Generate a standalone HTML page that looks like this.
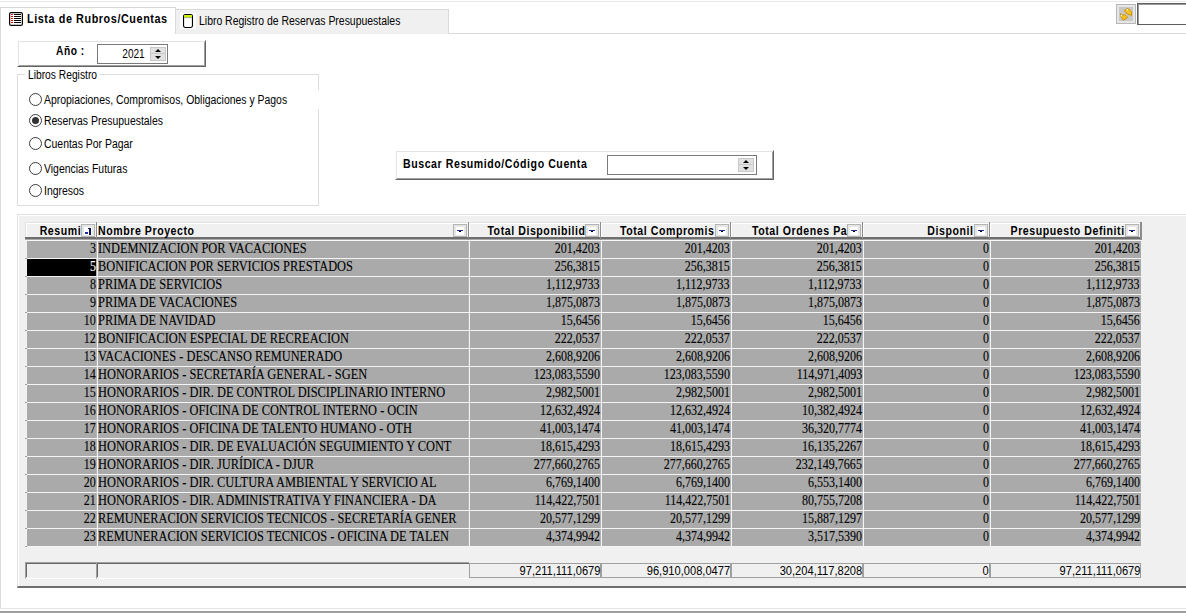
<!DOCTYPE html><html><head><meta charset="utf-8"><style>
*{margin:0;padding:0;box-sizing:border-box}
html,body{width:1186px;height:613px;overflow:hidden;background:#fff;position:relative}
body{font-family:"Liberation Sans",sans-serif;font-size:12px;color:#000}
.a{position:absolute}
.radio{position:absolute;width:13px;height:13px;border-radius:50%;border:1px solid #3c3c3c;background:#fff}
.radio.on::after{content:"";position:absolute;left:2px;top:2px;width:7px;height:7px;border-radius:50%;background:#333}
.dd{position:absolute;width:14px;height:13px;background:#e6e6e6;border:1px solid #b4b4b4}
.dd i{position:absolute;left:2px;top:2px;width:8px;height:8px;background:#fff}
.dd i::before{content:"";position:absolute;left:1px;top:3px;width:6px;height:1px;background:#1c2f8c}
.dd i::after{content:"";position:absolute;left:3px;top:4px;width:2px;height:1px;background:#000}
.spin{position:absolute;background:#e1e1e1;border:1px solid #c8c8c8}
</style></head><body>
<div style="position:absolute;left:0px;top:1px;width:1186px;height:1px;background:#e8e8e8;"></div>
<div style="position:absolute;left:0px;top:33px;width:1px;height:575px;background:#dcdcdc;"></div>
<div style="position:absolute;left:175px;top:33px;width:1011px;height:1px;background:#d9d9d9;"></div>
<div style="position:absolute;left:0px;top:608px;width:1186px;height:1px;background:#e3e3e3;"></div>
<div style="position:absolute;left:0px;top:611px;width:1186px;height:2px;background:#a0a0a0;"></div>
<div class="a" style="left:0;top:7px;width:176px;height:27px;border:1px solid #d9d9d9;border-bottom:none;background:#fff"></div>
<svg class="a" style="left:9px;top:12px" width="14" height="14" viewBox="0 0 14 14">
<rect x="0.6" y="0.6" width="12.8" height="12.8" rx="1.5" fill="#fff" stroke="#000" stroke-width="1.2"/>
<g fill="#e00000" shape-rendering="crispEdges"><rect x="2" y="2" width="2" height="1"/><rect x="2" y="4" width="2" height="1"/><rect x="2" y="6" width="2" height="1"/><rect x="2" y="8" width="2" height="1"/><rect x="2" y="10" width="2" height="1"/></g>
<g fill="#000" shape-rendering="crispEdges"><rect x="5" y="2" width="7" height="1"/><rect x="5" y="4" width="7" height="1"/><rect x="5" y="6" width="7" height="1"/><rect x="5" y="8" width="7" height="1"/><rect x="5" y="10" width="7" height="1"/></g>
</svg>
<div style="position:absolute;left:27px;top:12.84px;font-family:'Liberation Sans',sans-serif;font-weight:bold;font-size:12px;line-height:1;white-space:nowrap;color:#000;transform:scaleX(0.9);transform-origin:left 0;letter-spacing:0.65px;">Lista de Rubros/Cuentas</div>
<div class="a" style="left:175px;top:9px;width:274px;height:25px;border:1px solid #d9d9d9;border-bottom:none;background:#f0f0f0"></div>
<div style="position:absolute;left:180px;top:13px;width:16px;height:16px;background:#fbfbfb;"></div>
<svg class="a" style="left:183px;top:14px" width="10" height="14" viewBox="0 0 10 14">
<rect x="0.55" y="0.55" width="8.9" height="12.9" rx="1.6" fill="#fff" stroke="#000" stroke-width="1.1"/>
<rect x="1.1" y="1.1" width="7.8" height="2.4" fill="#c8f000"/>
<rect x="1.1" y="3.5" width="7.8" height="0.6" fill="#7a7a50"/>
</svg>
<div style="position:absolute;left:199px;top:14.84px;font-family:'Liberation Sans',sans-serif;font-weight:normal;font-size:12px;line-height:1;white-space:nowrap;color:#000;transform:scaleX(0.87);transform-origin:left 0;">Libro Registro de Reservas Presupuestales</div>
<div class="a" style="left:1116px;top:4px;width:20px;height:20px;background:#e6e6e6;border:1px solid #b8b8b8"></div>
<div style="position:absolute;left:1119px;top:7px;width:14px;height:14px;background:#c8c8c8;"></div>
<svg class="a" style="left:1114px;top:2px" width="24" height="24" viewBox="0 0 24 24">
<path d="M13.7 6.3 L10.2 8.4 L11.6 10.2 L13.3 11.9 L17.3 13.5 L17.6 9.8 L15.8 7.8 Z" fill="#f3c21c" stroke="#cf8a00" stroke-width="0.9" stroke-linejoin="round"/>
<path d="M6.3 11.4 L6.7 14.1 L9.4 18.4 L13.7 15.3 L10.8 12.6 L8 13.2 Z" fill="#f3c21c" stroke="#cf8a00" stroke-width="0.9" stroke-linejoin="round"/>
<circle cx="13.4" cy="7.8" r="0.8" fill="#fff"/><circle cx="7.4" cy="13.6" r="0.8" fill="#fff"/>
</svg>
<div class="a" style="left:1137px;top:3px;width:60px;height:22px;border:1px solid #5e5e5e;box-shadow:inset 1px 1px 0 #9a9a9a;background:#fff"></div>
<div class="a" style="left:17px;top:40px;width:189px;height:27px;border:1px solid;border-color:#fff #646464 #646464 #fff;box-shadow:inset 1px 1px 0 #e3e3e3,inset -1px -1px 0 #a0a0a0;background:#fff"></div>
<div style="position:absolute;left:56px;top:44.84px;font-family:'Liberation Sans',sans-serif;font-weight:bold;font-size:12px;line-height:1;white-space:nowrap;color:#000;transform:scaleX(0.85);transform-origin:left 0;letter-spacing:0.65px;">Año :</div>
<div class="a" style="left:97px;top:44px;width:71px;height:20px;border:1px solid #7a7a7a;background:#fff"></div>
<div style="position:absolute;right:1041px;top:47.84px;font-family:'Liberation Sans',sans-serif;font-weight:normal;font-size:12px;line-height:1;white-space:nowrap;color:#000;transform:scaleX(0.84);transform-origin:right 0;">2021</div>
<div class="spin" style="left:150px;top:47px;width:16px;height:14px"></div>
<div style="position:absolute;left:151px;top:53px;width:14px;height:1px;background:#c8c8c8;"></div>
<svg class="a" style="left:150px;top:47px" width="16" height="14"><path d="M5 5 L8 2 L11 5 Z" fill="#000"/><path d="M5 9 L11 9 L8 12 Z" fill="#000"/></svg>
<div class="a" style="left:17px;top:74px;width:302px;height:132px;border:1px solid #dcdcdc"></div>
<div style="position:absolute;left:25px;top:73px;width:74px;height:3px;background:#fff;"></div>
<div style="position:absolute;left:28px;top:68.84px;font-family:'Liberation Sans',sans-serif;font-weight:normal;font-size:12px;line-height:1;white-space:nowrap;color:#000;transform:scaleX(0.855);transform-origin:left 0;">Libros Registro</div>
<div style="position:absolute;left:28px;top:90px;width:295px;height:19px;background:#fff;"></div>
<div class="radio" style="left:29px;top:93px"></div>
<div style="position:absolute;left:44px;top:93.84px;font-family:'Liberation Sans',sans-serif;font-weight:normal;font-size:12px;line-height:1;white-space:nowrap;color:#000;transform:scaleX(0.87);transform-origin:left 0;">Apropiaciones, Compromisos, Obligaciones y Pagos</div>
<div class="radio on" style="left:29px;top:114px"></div>
<div style="position:absolute;left:44px;top:114.84px;font-family:'Liberation Sans',sans-serif;font-weight:normal;font-size:12px;line-height:1;white-space:nowrap;color:#000;transform:scaleX(0.87);transform-origin:left 0;">Reservas Presupuestales</div>
<div class="radio" style="left:29px;top:137px"></div>
<div style="position:absolute;left:44px;top:137.84px;font-family:'Liberation Sans',sans-serif;font-weight:normal;font-size:12px;line-height:1;white-space:nowrap;color:#000;transform:scaleX(0.87);transform-origin:left 0;">Cuentas Por Pagar</div>
<div class="radio" style="left:29px;top:162px"></div>
<div style="position:absolute;left:44px;top:162.84px;font-family:'Liberation Sans',sans-serif;font-weight:normal;font-size:12px;line-height:1;white-space:nowrap;color:#000;transform:scaleX(0.87);transform-origin:left 0;">Vigencias Futuras</div>
<div class="radio" style="left:29px;top:184px"></div>
<div style="position:absolute;left:44px;top:184.84px;font-family:'Liberation Sans',sans-serif;font-weight:normal;font-size:12px;line-height:1;white-space:nowrap;color:#000;transform:scaleX(0.87);transform-origin:left 0;">Ingresos</div>
<div class="a" style="left:395px;top:150px;width:379px;height:30px;border:1px solid;border-color:#fff #646464 #646464 #fff;box-shadow:inset 1px 1px 0 #e3e3e3,inset -1px -1px 0 #a0a0a0;background:#fff"></div>
<div style="position:absolute;left:403px;top:157.84px;font-family:'Liberation Sans',sans-serif;font-weight:bold;font-size:12px;line-height:1;white-space:nowrap;color:#000;transform:scaleX(0.88);transform-origin:left 0;letter-spacing:0.65px;">Buscar Resumido/Código Cuenta</div>
<div class="a" style="left:607px;top:155px;width:150px;height:20px;border:1px solid #7a7a7a;background:#fff"></div>
<div class="spin" style="left:738px;top:158px;width:16px;height:14px"></div>
<div style="position:absolute;left:739px;top:164px;width:14px;height:1px;background:#c8c8c8;"></div>
<svg class="a" style="left:738px;top:158px" width="16" height="14"><path d="M5 5 L8 2 L11 5 Z" fill="#000"/><path d="M5 9 L11 9 L8 12 Z" fill="#000"/></svg>
<div class="a" style="left:17px;top:214px;width:1169px;height:374px;background:#f0f0f0;border-top:1px solid #e0e0e0;border-left:1px solid #e0e0e0;border-bottom:2px solid #6e6e6e"></div>
<div style="position:absolute;left:18px;top:215px;width:1168px;height:1px;background:#fff;"></div>
<div style="position:absolute;left:18px;top:215px;width:1px;height:371px;background:#fff;"></div>
<div style="position:absolute;left:25px;top:222px;width:1116px;height:1px;background:#e3e3e3;"></div>
<div style="position:absolute;left:26px;top:223px;width:1115px;height:1px;background:#fff;"></div>
<div style="position:absolute;left:25px;top:222px;width:1px;height:15px;background:#e3e3e3;"></div>
<div style="position:absolute;left:26px;top:223px;width:1px;height:14px;background:#fff;"></div>
<div style="position:absolute;left:25px;top:237px;width:1116px;height:2px;background:#6e6e6e;"></div>
<div style="position:absolute;left:25px;top:239px;width:1116px;height:1px;background:#a8a8a8;"></div>
<div style="position:absolute;left:25px;top:240px;width:1116px;height:1px;background:#f7f7f7;"></div>
<div style="position:absolute;left:96px;top:222px;width:1px;height:18px;background:#8c8c8c;"></div>
<div class="a" style="left:81px;top:224px;width:14px;height:13px;background:#e6e6e6;border:1px solid #b4b4b4"><div class="a" style="left:2px;top:2px;width:8px;height:8px;background:#fff"></div></div>
<div class="a" style="left:85px;top:232px;width:3px;height:2px;background:#1c2f9c"></div>
<div class="a" style="left:89px;top:228px;width:2px;height:7px;background:#0a1450"></div>
<div class="a" style="left:88px;top:228px;width:1px;height:1px;background:#0a1450"></div>
<div style="position:absolute;right:1105px;top:224.84px;font-family:'Liberation Sans',sans-serif;font-weight:bold;font-size:12px;line-height:1;white-space:nowrap;color:#000;transform:scaleX(0.88);transform-origin:right 0;letter-spacing:0.65px;">Resumi</div>
<div style="position:absolute;left:97px;top:223px;width:1px;height:14px;background:#fff;"></div>
<div style="position:absolute;left:468px;top:222px;width:1px;height:18px;background:#8c8c8c;"></div>
<div class="dd" style="left:453px;top:224px"><i></i></div>
<div style="position:absolute;left:98px;top:224.84px;font-family:'Liberation Sans',sans-serif;font-weight:bold;font-size:12px;line-height:1;white-space:nowrap;color:#000;transform:scaleX(0.88);transform-origin:left 0;letter-spacing:0.65px;">Nombre Proyecto</div>
<div style="position:absolute;left:469px;top:223px;width:1px;height:14px;background:#fff;"></div>
<div style="position:absolute;left:600px;top:222px;width:1px;height:18px;background:#8c8c8c;"></div>
<div class="dd" style="left:585px;top:224px"><i></i></div>
<div style="position:absolute;right:601px;top:224.84px;font-family:'Liberation Sans',sans-serif;font-weight:bold;font-size:12px;line-height:1;white-space:nowrap;color:#000;transform:scaleX(0.88);transform-origin:right 0;letter-spacing:0.65px;">Total Disponibilid</div>
<div style="position:absolute;left:601px;top:223px;width:1px;height:14px;background:#fff;"></div>
<div style="position:absolute;left:730px;top:222px;width:1px;height:18px;background:#8c8c8c;"></div>
<div class="dd" style="left:715px;top:224px"><i></i></div>
<div style="position:absolute;right:471px;top:224.84px;font-family:'Liberation Sans',sans-serif;font-weight:bold;font-size:12px;line-height:1;white-space:nowrap;color:#000;transform:scaleX(0.88);transform-origin:right 0;letter-spacing:0.65px;">Total Compromis</div>
<div style="position:absolute;left:731px;top:223px;width:1px;height:14px;background:#fff;"></div>
<div style="position:absolute;left:862px;top:222px;width:1px;height:18px;background:#8c8c8c;"></div>
<div class="dd" style="left:847px;top:224px"><i></i></div>
<div style="position:absolute;right:339px;top:224.84px;font-family:'Liberation Sans',sans-serif;font-weight:bold;font-size:12px;line-height:1;white-space:nowrap;color:#000;transform:scaleX(0.88);transform-origin:right 0;letter-spacing:0.65px;">Total Ordenes Pa</div>
<div style="position:absolute;left:863px;top:223px;width:1px;height:14px;background:#fff;"></div>
<div style="position:absolute;left:989px;top:222px;width:1px;height:18px;background:#8c8c8c;"></div>
<div class="dd" style="left:974px;top:224px"><i></i></div>
<div style="position:absolute;right:212px;top:224.84px;font-family:'Liberation Sans',sans-serif;font-weight:bold;font-size:12px;line-height:1;white-space:nowrap;color:#000;transform:scaleX(0.88);transform-origin:right 0;letter-spacing:0.65px;">Disponil</div>
<div style="position:absolute;left:990px;top:223px;width:1px;height:14px;background:#fff;"></div>
<div style="position:absolute;left:1140px;top:222px;width:2px;height:18px;background:#8c8c8c;"></div>
<div class="dd" style="left:1125px;top:224px"><i></i></div>
<div style="position:absolute;right:61px;top:224.84px;font-family:'Liberation Sans',sans-serif;font-weight:bold;font-size:12px;line-height:1;white-space:nowrap;color:#000;transform:scaleX(0.88);transform-origin:right 0;letter-spacing:0.65px;">Presupuesto Definiti</div>
<div style="position:absolute;left:27px;top:241px;width:1114px;height:17px;background:#aaaaaa;"></div>
<div style="position:absolute;left:25px;top:258px;width:2px;height:1px;background:#a0a0a0;"></div>
<div style="position:absolute;left:96px;top:241px;width:1px;height:17px;background:#b4b4b4;"></div>
<div style="position:absolute;left:97px;top:241px;width:1px;height:17px;background:#f4f4f4;"></div>
<div style="position:absolute;left:468px;top:241px;width:1px;height:17px;background:#b4b4b4;"></div>
<div style="position:absolute;left:469px;top:241px;width:1px;height:17px;background:#f4f4f4;"></div>
<div style="position:absolute;left:600px;top:241px;width:1px;height:17px;background:#b4b4b4;"></div>
<div style="position:absolute;left:601px;top:241px;width:1px;height:17px;background:#f4f4f4;"></div>
<div style="position:absolute;left:730px;top:241px;width:1px;height:17px;background:#b4b4b4;"></div>
<div style="position:absolute;left:731px;top:241px;width:1px;height:17px;background:#f4f4f4;"></div>
<div style="position:absolute;left:862px;top:241px;width:1px;height:17px;background:#b4b4b4;"></div>
<div style="position:absolute;left:863px;top:241px;width:1px;height:17px;background:#f4f4f4;"></div>
<div style="position:absolute;left:989px;top:241px;width:1px;height:17px;background:#b4b4b4;"></div>
<div style="position:absolute;left:990px;top:241px;width:1px;height:17px;background:#f4f4f4;"></div>
<div style="position:absolute;left:27px;top:258px;width:1114px;height:1px;background:#f4f4f4;"></div>
<div style="position:absolute;right:1090px;top:242.44px;font-family:'Liberation Serif',serif;font-weight:normal;font-size:13.8px;line-height:1;white-space:nowrap;color:#000;transform:scaleX(0.8707);transform-origin:right 0;-webkit-text-stroke:0.1px currentColor;">3</div>
<div style="position:absolute;left:98px;top:242.44px;font-family:'Liberation Serif',serif;font-weight:normal;font-size:13.8px;line-height:1;white-space:nowrap;color:#000;transform:scaleX(0.8971);transform-origin:left 0;-webkit-text-stroke:0.1px currentColor;">INDEMNIZACION POR VACACIONES</div>
<div style="position:absolute;right:586px;top:242.44px;font-family:'Liberation Serif',serif;font-weight:normal;font-size:13.8px;line-height:1;white-space:nowrap;color:#000;transform:scaleX(0.8707);transform-origin:right 0;-webkit-text-stroke:0.1px currentColor;">201,4203</div>
<div style="position:absolute;right:456px;top:242.44px;font-family:'Liberation Serif',serif;font-weight:normal;font-size:13.8px;line-height:1;white-space:nowrap;color:#000;transform:scaleX(0.8707);transform-origin:right 0;-webkit-text-stroke:0.1px currentColor;">201,4203</div>
<div style="position:absolute;right:324px;top:242.44px;font-family:'Liberation Serif',serif;font-weight:normal;font-size:13.8px;line-height:1;white-space:nowrap;color:#000;transform:scaleX(0.8707);transform-origin:right 0;-webkit-text-stroke:0.1px currentColor;">201,4203</div>
<div style="position:absolute;right:197px;top:242.44px;font-family:'Liberation Serif',serif;font-weight:normal;font-size:13.8px;line-height:1;white-space:nowrap;color:#000;transform:scaleX(0.8707);transform-origin:right 0;-webkit-text-stroke:0.1px currentColor;">0</div>
<div style="position:absolute;right:46px;top:242.44px;font-family:'Liberation Serif',serif;font-weight:normal;font-size:13.8px;line-height:1;white-space:nowrap;color:#000;transform:scaleX(0.8707);transform-origin:right 0;-webkit-text-stroke:0.1px currentColor;">201,4203</div>
<div style="position:absolute;left:27px;top:259px;width:1114px;height:17px;background:#aaaaaa;"></div>
<div style="position:absolute;left:25px;top:276px;width:2px;height:1px;background:#a0a0a0;"></div>
<div style="position:absolute;left:27px;top:259px;width:69px;height:17px;background:#000;"></div>
<div style="position:absolute;left:96px;top:259px;width:1px;height:17px;background:#b4b4b4;"></div>
<div style="position:absolute;left:97px;top:259px;width:1px;height:17px;background:#f4f4f4;"></div>
<div style="position:absolute;left:468px;top:259px;width:1px;height:17px;background:#b4b4b4;"></div>
<div style="position:absolute;left:469px;top:259px;width:1px;height:17px;background:#f4f4f4;"></div>
<div style="position:absolute;left:600px;top:259px;width:1px;height:17px;background:#b4b4b4;"></div>
<div style="position:absolute;left:601px;top:259px;width:1px;height:17px;background:#f4f4f4;"></div>
<div style="position:absolute;left:730px;top:259px;width:1px;height:17px;background:#b4b4b4;"></div>
<div style="position:absolute;left:731px;top:259px;width:1px;height:17px;background:#f4f4f4;"></div>
<div style="position:absolute;left:862px;top:259px;width:1px;height:17px;background:#b4b4b4;"></div>
<div style="position:absolute;left:863px;top:259px;width:1px;height:17px;background:#f4f4f4;"></div>
<div style="position:absolute;left:989px;top:259px;width:1px;height:17px;background:#b4b4b4;"></div>
<div style="position:absolute;left:990px;top:259px;width:1px;height:17px;background:#f4f4f4;"></div>
<div style="position:absolute;left:27px;top:276px;width:1114px;height:1px;background:#f4f4f4;"></div>
<div style="position:absolute;right:1090px;top:260.44px;font-family:'Liberation Serif',serif;font-weight:normal;font-size:13.8px;line-height:1;white-space:nowrap;color:#fff;transform:scaleX(0.8707);transform-origin:right 0;-webkit-text-stroke:0.1px currentColor;">5</div>
<div style="position:absolute;left:98px;top:260.44px;font-family:'Liberation Serif',serif;font-weight:normal;font-size:13.8px;line-height:1;white-space:nowrap;color:#000;transform:scaleX(0.8971);transform-origin:left 0;-webkit-text-stroke:0.1px currentColor;">BONIFICACION POR SERVICIOS PRESTADOS</div>
<div style="position:absolute;right:586px;top:260.44px;font-family:'Liberation Serif',serif;font-weight:normal;font-size:13.8px;line-height:1;white-space:nowrap;color:#000;transform:scaleX(0.8707);transform-origin:right 0;-webkit-text-stroke:0.1px currentColor;">256,3815</div>
<div style="position:absolute;right:456px;top:260.44px;font-family:'Liberation Serif',serif;font-weight:normal;font-size:13.8px;line-height:1;white-space:nowrap;color:#000;transform:scaleX(0.8707);transform-origin:right 0;-webkit-text-stroke:0.1px currentColor;">256,3815</div>
<div style="position:absolute;right:324px;top:260.44px;font-family:'Liberation Serif',serif;font-weight:normal;font-size:13.8px;line-height:1;white-space:nowrap;color:#000;transform:scaleX(0.8707);transform-origin:right 0;-webkit-text-stroke:0.1px currentColor;">256,3815</div>
<div style="position:absolute;right:197px;top:260.44px;font-family:'Liberation Serif',serif;font-weight:normal;font-size:13.8px;line-height:1;white-space:nowrap;color:#000;transform:scaleX(0.8707);transform-origin:right 0;-webkit-text-stroke:0.1px currentColor;">0</div>
<div style="position:absolute;right:46px;top:260.44px;font-family:'Liberation Serif',serif;font-weight:normal;font-size:13.8px;line-height:1;white-space:nowrap;color:#000;transform:scaleX(0.8707);transform-origin:right 0;-webkit-text-stroke:0.1px currentColor;">256,3815</div>
<div style="position:absolute;left:27px;top:277px;width:1114px;height:17px;background:#aaaaaa;"></div>
<div style="position:absolute;left:25px;top:294px;width:2px;height:1px;background:#a0a0a0;"></div>
<div style="position:absolute;left:96px;top:277px;width:1px;height:17px;background:#b4b4b4;"></div>
<div style="position:absolute;left:97px;top:277px;width:1px;height:17px;background:#f4f4f4;"></div>
<div style="position:absolute;left:468px;top:277px;width:1px;height:17px;background:#b4b4b4;"></div>
<div style="position:absolute;left:469px;top:277px;width:1px;height:17px;background:#f4f4f4;"></div>
<div style="position:absolute;left:600px;top:277px;width:1px;height:17px;background:#b4b4b4;"></div>
<div style="position:absolute;left:601px;top:277px;width:1px;height:17px;background:#f4f4f4;"></div>
<div style="position:absolute;left:730px;top:277px;width:1px;height:17px;background:#b4b4b4;"></div>
<div style="position:absolute;left:731px;top:277px;width:1px;height:17px;background:#f4f4f4;"></div>
<div style="position:absolute;left:862px;top:277px;width:1px;height:17px;background:#b4b4b4;"></div>
<div style="position:absolute;left:863px;top:277px;width:1px;height:17px;background:#f4f4f4;"></div>
<div style="position:absolute;left:989px;top:277px;width:1px;height:17px;background:#b4b4b4;"></div>
<div style="position:absolute;left:990px;top:277px;width:1px;height:17px;background:#f4f4f4;"></div>
<div style="position:absolute;left:27px;top:294px;width:1114px;height:1px;background:#f4f4f4;"></div>
<div style="position:absolute;right:1090px;top:278.44px;font-family:'Liberation Serif',serif;font-weight:normal;font-size:13.8px;line-height:1;white-space:nowrap;color:#000;transform:scaleX(0.8707);transform-origin:right 0;-webkit-text-stroke:0.1px currentColor;">8</div>
<div style="position:absolute;left:98px;top:278.44px;font-family:'Liberation Serif',serif;font-weight:normal;font-size:13.8px;line-height:1;white-space:nowrap;color:#000;transform:scaleX(0.8971);transform-origin:left 0;-webkit-text-stroke:0.1px currentColor;">PRIMA DE SERVICIOS</div>
<div style="position:absolute;right:586px;top:278.44px;font-family:'Liberation Serif',serif;font-weight:normal;font-size:13.8px;line-height:1;white-space:nowrap;color:#000;transform:scaleX(0.8707);transform-origin:right 0;-webkit-text-stroke:0.1px currentColor;">1,112,9733</div>
<div style="position:absolute;right:456px;top:278.44px;font-family:'Liberation Serif',serif;font-weight:normal;font-size:13.8px;line-height:1;white-space:nowrap;color:#000;transform:scaleX(0.8707);transform-origin:right 0;-webkit-text-stroke:0.1px currentColor;">1,112,9733</div>
<div style="position:absolute;right:324px;top:278.44px;font-family:'Liberation Serif',serif;font-weight:normal;font-size:13.8px;line-height:1;white-space:nowrap;color:#000;transform:scaleX(0.8707);transform-origin:right 0;-webkit-text-stroke:0.1px currentColor;">1,112,9733</div>
<div style="position:absolute;right:197px;top:278.44px;font-family:'Liberation Serif',serif;font-weight:normal;font-size:13.8px;line-height:1;white-space:nowrap;color:#000;transform:scaleX(0.8707);transform-origin:right 0;-webkit-text-stroke:0.1px currentColor;">0</div>
<div style="position:absolute;right:46px;top:278.44px;font-family:'Liberation Serif',serif;font-weight:normal;font-size:13.8px;line-height:1;white-space:nowrap;color:#000;transform:scaleX(0.8707);transform-origin:right 0;-webkit-text-stroke:0.1px currentColor;">1,112,9733</div>
<div style="position:absolute;left:27px;top:295px;width:1114px;height:17px;background:#aaaaaa;"></div>
<div style="position:absolute;left:25px;top:312px;width:2px;height:1px;background:#a0a0a0;"></div>
<div style="position:absolute;left:96px;top:295px;width:1px;height:17px;background:#b4b4b4;"></div>
<div style="position:absolute;left:97px;top:295px;width:1px;height:17px;background:#f4f4f4;"></div>
<div style="position:absolute;left:468px;top:295px;width:1px;height:17px;background:#b4b4b4;"></div>
<div style="position:absolute;left:469px;top:295px;width:1px;height:17px;background:#f4f4f4;"></div>
<div style="position:absolute;left:600px;top:295px;width:1px;height:17px;background:#b4b4b4;"></div>
<div style="position:absolute;left:601px;top:295px;width:1px;height:17px;background:#f4f4f4;"></div>
<div style="position:absolute;left:730px;top:295px;width:1px;height:17px;background:#b4b4b4;"></div>
<div style="position:absolute;left:731px;top:295px;width:1px;height:17px;background:#f4f4f4;"></div>
<div style="position:absolute;left:862px;top:295px;width:1px;height:17px;background:#b4b4b4;"></div>
<div style="position:absolute;left:863px;top:295px;width:1px;height:17px;background:#f4f4f4;"></div>
<div style="position:absolute;left:989px;top:295px;width:1px;height:17px;background:#b4b4b4;"></div>
<div style="position:absolute;left:990px;top:295px;width:1px;height:17px;background:#f4f4f4;"></div>
<div style="position:absolute;left:27px;top:312px;width:1114px;height:1px;background:#f4f4f4;"></div>
<div style="position:absolute;right:1090px;top:296.44px;font-family:'Liberation Serif',serif;font-weight:normal;font-size:13.8px;line-height:1;white-space:nowrap;color:#000;transform:scaleX(0.8707);transform-origin:right 0;-webkit-text-stroke:0.1px currentColor;">9</div>
<div style="position:absolute;left:98px;top:296.44px;font-family:'Liberation Serif',serif;font-weight:normal;font-size:13.8px;line-height:1;white-space:nowrap;color:#000;transform:scaleX(0.8971);transform-origin:left 0;-webkit-text-stroke:0.1px currentColor;">PRIMA DE VACACIONES</div>
<div style="position:absolute;right:586px;top:296.44px;font-family:'Liberation Serif',serif;font-weight:normal;font-size:13.8px;line-height:1;white-space:nowrap;color:#000;transform:scaleX(0.8707);transform-origin:right 0;-webkit-text-stroke:0.1px currentColor;">1,875,0873</div>
<div style="position:absolute;right:456px;top:296.44px;font-family:'Liberation Serif',serif;font-weight:normal;font-size:13.8px;line-height:1;white-space:nowrap;color:#000;transform:scaleX(0.8707);transform-origin:right 0;-webkit-text-stroke:0.1px currentColor;">1,875,0873</div>
<div style="position:absolute;right:324px;top:296.44px;font-family:'Liberation Serif',serif;font-weight:normal;font-size:13.8px;line-height:1;white-space:nowrap;color:#000;transform:scaleX(0.8707);transform-origin:right 0;-webkit-text-stroke:0.1px currentColor;">1,875,0873</div>
<div style="position:absolute;right:197px;top:296.44px;font-family:'Liberation Serif',serif;font-weight:normal;font-size:13.8px;line-height:1;white-space:nowrap;color:#000;transform:scaleX(0.8707);transform-origin:right 0;-webkit-text-stroke:0.1px currentColor;">0</div>
<div style="position:absolute;right:46px;top:296.44px;font-family:'Liberation Serif',serif;font-weight:normal;font-size:13.8px;line-height:1;white-space:nowrap;color:#000;transform:scaleX(0.8707);transform-origin:right 0;-webkit-text-stroke:0.1px currentColor;">1,875,0873</div>
<div style="position:absolute;left:27px;top:313px;width:1114px;height:17px;background:#aaaaaa;"></div>
<div style="position:absolute;left:25px;top:330px;width:2px;height:1px;background:#a0a0a0;"></div>
<div style="position:absolute;left:96px;top:313px;width:1px;height:17px;background:#b4b4b4;"></div>
<div style="position:absolute;left:97px;top:313px;width:1px;height:17px;background:#f4f4f4;"></div>
<div style="position:absolute;left:468px;top:313px;width:1px;height:17px;background:#b4b4b4;"></div>
<div style="position:absolute;left:469px;top:313px;width:1px;height:17px;background:#f4f4f4;"></div>
<div style="position:absolute;left:600px;top:313px;width:1px;height:17px;background:#b4b4b4;"></div>
<div style="position:absolute;left:601px;top:313px;width:1px;height:17px;background:#f4f4f4;"></div>
<div style="position:absolute;left:730px;top:313px;width:1px;height:17px;background:#b4b4b4;"></div>
<div style="position:absolute;left:731px;top:313px;width:1px;height:17px;background:#f4f4f4;"></div>
<div style="position:absolute;left:862px;top:313px;width:1px;height:17px;background:#b4b4b4;"></div>
<div style="position:absolute;left:863px;top:313px;width:1px;height:17px;background:#f4f4f4;"></div>
<div style="position:absolute;left:989px;top:313px;width:1px;height:17px;background:#b4b4b4;"></div>
<div style="position:absolute;left:990px;top:313px;width:1px;height:17px;background:#f4f4f4;"></div>
<div style="position:absolute;left:27px;top:330px;width:1114px;height:1px;background:#f4f4f4;"></div>
<div style="position:absolute;right:1090px;top:314.44px;font-family:'Liberation Serif',serif;font-weight:normal;font-size:13.8px;line-height:1;white-space:nowrap;color:#000;transform:scaleX(0.8707);transform-origin:right 0;-webkit-text-stroke:0.1px currentColor;">10</div>
<div style="position:absolute;left:98px;top:314.44px;font-family:'Liberation Serif',serif;font-weight:normal;font-size:13.8px;line-height:1;white-space:nowrap;color:#000;transform:scaleX(0.8971);transform-origin:left 0;-webkit-text-stroke:0.1px currentColor;">PRIMA DE NAVIDAD</div>
<div style="position:absolute;right:586px;top:314.44px;font-family:'Liberation Serif',serif;font-weight:normal;font-size:13.8px;line-height:1;white-space:nowrap;color:#000;transform:scaleX(0.8707);transform-origin:right 0;-webkit-text-stroke:0.1px currentColor;">15,6456</div>
<div style="position:absolute;right:456px;top:314.44px;font-family:'Liberation Serif',serif;font-weight:normal;font-size:13.8px;line-height:1;white-space:nowrap;color:#000;transform:scaleX(0.8707);transform-origin:right 0;-webkit-text-stroke:0.1px currentColor;">15,6456</div>
<div style="position:absolute;right:324px;top:314.44px;font-family:'Liberation Serif',serif;font-weight:normal;font-size:13.8px;line-height:1;white-space:nowrap;color:#000;transform:scaleX(0.8707);transform-origin:right 0;-webkit-text-stroke:0.1px currentColor;">15,6456</div>
<div style="position:absolute;right:197px;top:314.44px;font-family:'Liberation Serif',serif;font-weight:normal;font-size:13.8px;line-height:1;white-space:nowrap;color:#000;transform:scaleX(0.8707);transform-origin:right 0;-webkit-text-stroke:0.1px currentColor;">0</div>
<div style="position:absolute;right:46px;top:314.44px;font-family:'Liberation Serif',serif;font-weight:normal;font-size:13.8px;line-height:1;white-space:nowrap;color:#000;transform:scaleX(0.8707);transform-origin:right 0;-webkit-text-stroke:0.1px currentColor;">15,6456</div>
<div style="position:absolute;left:27px;top:331px;width:1114px;height:17px;background:#aaaaaa;"></div>
<div style="position:absolute;left:25px;top:348px;width:2px;height:1px;background:#a0a0a0;"></div>
<div style="position:absolute;left:96px;top:331px;width:1px;height:17px;background:#b4b4b4;"></div>
<div style="position:absolute;left:97px;top:331px;width:1px;height:17px;background:#f4f4f4;"></div>
<div style="position:absolute;left:468px;top:331px;width:1px;height:17px;background:#b4b4b4;"></div>
<div style="position:absolute;left:469px;top:331px;width:1px;height:17px;background:#f4f4f4;"></div>
<div style="position:absolute;left:600px;top:331px;width:1px;height:17px;background:#b4b4b4;"></div>
<div style="position:absolute;left:601px;top:331px;width:1px;height:17px;background:#f4f4f4;"></div>
<div style="position:absolute;left:730px;top:331px;width:1px;height:17px;background:#b4b4b4;"></div>
<div style="position:absolute;left:731px;top:331px;width:1px;height:17px;background:#f4f4f4;"></div>
<div style="position:absolute;left:862px;top:331px;width:1px;height:17px;background:#b4b4b4;"></div>
<div style="position:absolute;left:863px;top:331px;width:1px;height:17px;background:#f4f4f4;"></div>
<div style="position:absolute;left:989px;top:331px;width:1px;height:17px;background:#b4b4b4;"></div>
<div style="position:absolute;left:990px;top:331px;width:1px;height:17px;background:#f4f4f4;"></div>
<div style="position:absolute;left:27px;top:348px;width:1114px;height:1px;background:#f4f4f4;"></div>
<div style="position:absolute;right:1090px;top:332.44px;font-family:'Liberation Serif',serif;font-weight:normal;font-size:13.8px;line-height:1;white-space:nowrap;color:#000;transform:scaleX(0.8707);transform-origin:right 0;-webkit-text-stroke:0.1px currentColor;">12</div>
<div style="position:absolute;left:98px;top:332.44px;font-family:'Liberation Serif',serif;font-weight:normal;font-size:13.8px;line-height:1;white-space:nowrap;color:#000;transform:scaleX(0.8971);transform-origin:left 0;-webkit-text-stroke:0.1px currentColor;">BONIFICACION ESPECIAL DE RECREACION</div>
<div style="position:absolute;right:586px;top:332.44px;font-family:'Liberation Serif',serif;font-weight:normal;font-size:13.8px;line-height:1;white-space:nowrap;color:#000;transform:scaleX(0.8707);transform-origin:right 0;-webkit-text-stroke:0.1px currentColor;">222,0537</div>
<div style="position:absolute;right:456px;top:332.44px;font-family:'Liberation Serif',serif;font-weight:normal;font-size:13.8px;line-height:1;white-space:nowrap;color:#000;transform:scaleX(0.8707);transform-origin:right 0;-webkit-text-stroke:0.1px currentColor;">222,0537</div>
<div style="position:absolute;right:324px;top:332.44px;font-family:'Liberation Serif',serif;font-weight:normal;font-size:13.8px;line-height:1;white-space:nowrap;color:#000;transform:scaleX(0.8707);transform-origin:right 0;-webkit-text-stroke:0.1px currentColor;">222,0537</div>
<div style="position:absolute;right:197px;top:332.44px;font-family:'Liberation Serif',serif;font-weight:normal;font-size:13.8px;line-height:1;white-space:nowrap;color:#000;transform:scaleX(0.8707);transform-origin:right 0;-webkit-text-stroke:0.1px currentColor;">0</div>
<div style="position:absolute;right:46px;top:332.44px;font-family:'Liberation Serif',serif;font-weight:normal;font-size:13.8px;line-height:1;white-space:nowrap;color:#000;transform:scaleX(0.8707);transform-origin:right 0;-webkit-text-stroke:0.1px currentColor;">222,0537</div>
<div style="position:absolute;left:27px;top:349px;width:1114px;height:17px;background:#aaaaaa;"></div>
<div style="position:absolute;left:25px;top:366px;width:2px;height:1px;background:#a0a0a0;"></div>
<div style="position:absolute;left:96px;top:349px;width:1px;height:17px;background:#b4b4b4;"></div>
<div style="position:absolute;left:97px;top:349px;width:1px;height:17px;background:#f4f4f4;"></div>
<div style="position:absolute;left:468px;top:349px;width:1px;height:17px;background:#b4b4b4;"></div>
<div style="position:absolute;left:469px;top:349px;width:1px;height:17px;background:#f4f4f4;"></div>
<div style="position:absolute;left:600px;top:349px;width:1px;height:17px;background:#b4b4b4;"></div>
<div style="position:absolute;left:601px;top:349px;width:1px;height:17px;background:#f4f4f4;"></div>
<div style="position:absolute;left:730px;top:349px;width:1px;height:17px;background:#b4b4b4;"></div>
<div style="position:absolute;left:731px;top:349px;width:1px;height:17px;background:#f4f4f4;"></div>
<div style="position:absolute;left:862px;top:349px;width:1px;height:17px;background:#b4b4b4;"></div>
<div style="position:absolute;left:863px;top:349px;width:1px;height:17px;background:#f4f4f4;"></div>
<div style="position:absolute;left:989px;top:349px;width:1px;height:17px;background:#b4b4b4;"></div>
<div style="position:absolute;left:990px;top:349px;width:1px;height:17px;background:#f4f4f4;"></div>
<div style="position:absolute;left:27px;top:366px;width:1114px;height:1px;background:#f4f4f4;"></div>
<div style="position:absolute;right:1090px;top:350.44px;font-family:'Liberation Serif',serif;font-weight:normal;font-size:13.8px;line-height:1;white-space:nowrap;color:#000;transform:scaleX(0.8707);transform-origin:right 0;-webkit-text-stroke:0.1px currentColor;">13</div>
<div style="position:absolute;left:98px;top:350.44px;font-family:'Liberation Serif',serif;font-weight:normal;font-size:13.8px;line-height:1;white-space:nowrap;color:#000;transform:scaleX(0.8971);transform-origin:left 0;-webkit-text-stroke:0.1px currentColor;">VACACIONES - DESCANSO REMUNERADO</div>
<div style="position:absolute;right:586px;top:350.44px;font-family:'Liberation Serif',serif;font-weight:normal;font-size:13.8px;line-height:1;white-space:nowrap;color:#000;transform:scaleX(0.8707);transform-origin:right 0;-webkit-text-stroke:0.1px currentColor;">2,608,9206</div>
<div style="position:absolute;right:456px;top:350.44px;font-family:'Liberation Serif',serif;font-weight:normal;font-size:13.8px;line-height:1;white-space:nowrap;color:#000;transform:scaleX(0.8707);transform-origin:right 0;-webkit-text-stroke:0.1px currentColor;">2,608,9206</div>
<div style="position:absolute;right:324px;top:350.44px;font-family:'Liberation Serif',serif;font-weight:normal;font-size:13.8px;line-height:1;white-space:nowrap;color:#000;transform:scaleX(0.8707);transform-origin:right 0;-webkit-text-stroke:0.1px currentColor;">2,608,9206</div>
<div style="position:absolute;right:197px;top:350.44px;font-family:'Liberation Serif',serif;font-weight:normal;font-size:13.8px;line-height:1;white-space:nowrap;color:#000;transform:scaleX(0.8707);transform-origin:right 0;-webkit-text-stroke:0.1px currentColor;">0</div>
<div style="position:absolute;right:46px;top:350.44px;font-family:'Liberation Serif',serif;font-weight:normal;font-size:13.8px;line-height:1;white-space:nowrap;color:#000;transform:scaleX(0.8707);transform-origin:right 0;-webkit-text-stroke:0.1px currentColor;">2,608,9206</div>
<div style="position:absolute;left:27px;top:367px;width:1114px;height:17px;background:#aaaaaa;"></div>
<div style="position:absolute;left:25px;top:384px;width:2px;height:1px;background:#a0a0a0;"></div>
<div style="position:absolute;left:96px;top:367px;width:1px;height:17px;background:#b4b4b4;"></div>
<div style="position:absolute;left:97px;top:367px;width:1px;height:17px;background:#f4f4f4;"></div>
<div style="position:absolute;left:468px;top:367px;width:1px;height:17px;background:#b4b4b4;"></div>
<div style="position:absolute;left:469px;top:367px;width:1px;height:17px;background:#f4f4f4;"></div>
<div style="position:absolute;left:600px;top:367px;width:1px;height:17px;background:#b4b4b4;"></div>
<div style="position:absolute;left:601px;top:367px;width:1px;height:17px;background:#f4f4f4;"></div>
<div style="position:absolute;left:730px;top:367px;width:1px;height:17px;background:#b4b4b4;"></div>
<div style="position:absolute;left:731px;top:367px;width:1px;height:17px;background:#f4f4f4;"></div>
<div style="position:absolute;left:862px;top:367px;width:1px;height:17px;background:#b4b4b4;"></div>
<div style="position:absolute;left:863px;top:367px;width:1px;height:17px;background:#f4f4f4;"></div>
<div style="position:absolute;left:989px;top:367px;width:1px;height:17px;background:#b4b4b4;"></div>
<div style="position:absolute;left:990px;top:367px;width:1px;height:17px;background:#f4f4f4;"></div>
<div style="position:absolute;left:27px;top:384px;width:1114px;height:1px;background:#f4f4f4;"></div>
<div style="position:absolute;right:1090px;top:368.44px;font-family:'Liberation Serif',serif;font-weight:normal;font-size:13.8px;line-height:1;white-space:nowrap;color:#000;transform:scaleX(0.8707);transform-origin:right 0;-webkit-text-stroke:0.1px currentColor;">14</div>
<div style="position:absolute;left:98px;top:368.44px;font-family:'Liberation Serif',serif;font-weight:normal;font-size:13.8px;line-height:1;white-space:nowrap;color:#000;transform:scaleX(0.8971);transform-origin:left 0;-webkit-text-stroke:0.1px currentColor;">HONORARIOS - SECRETARÍA GENERAL - SGEN</div>
<div style="position:absolute;right:586px;top:368.44px;font-family:'Liberation Serif',serif;font-weight:normal;font-size:13.8px;line-height:1;white-space:nowrap;color:#000;transform:scaleX(0.8707);transform-origin:right 0;-webkit-text-stroke:0.1px currentColor;">123,083,5590</div>
<div style="position:absolute;right:456px;top:368.44px;font-family:'Liberation Serif',serif;font-weight:normal;font-size:13.8px;line-height:1;white-space:nowrap;color:#000;transform:scaleX(0.8707);transform-origin:right 0;-webkit-text-stroke:0.1px currentColor;">123,083,5590</div>
<div style="position:absolute;right:324px;top:368.44px;font-family:'Liberation Serif',serif;font-weight:normal;font-size:13.8px;line-height:1;white-space:nowrap;color:#000;transform:scaleX(0.8707);transform-origin:right 0;-webkit-text-stroke:0.1px currentColor;">114,971,4093</div>
<div style="position:absolute;right:197px;top:368.44px;font-family:'Liberation Serif',serif;font-weight:normal;font-size:13.8px;line-height:1;white-space:nowrap;color:#000;transform:scaleX(0.8707);transform-origin:right 0;-webkit-text-stroke:0.1px currentColor;">0</div>
<div style="position:absolute;right:46px;top:368.44px;font-family:'Liberation Serif',serif;font-weight:normal;font-size:13.8px;line-height:1;white-space:nowrap;color:#000;transform:scaleX(0.8707);transform-origin:right 0;-webkit-text-stroke:0.1px currentColor;">123,083,5590</div>
<div style="position:absolute;left:27px;top:385px;width:1114px;height:17px;background:#aaaaaa;"></div>
<div style="position:absolute;left:25px;top:402px;width:2px;height:1px;background:#a0a0a0;"></div>
<div style="position:absolute;left:96px;top:385px;width:1px;height:17px;background:#b4b4b4;"></div>
<div style="position:absolute;left:97px;top:385px;width:1px;height:17px;background:#f4f4f4;"></div>
<div style="position:absolute;left:468px;top:385px;width:1px;height:17px;background:#b4b4b4;"></div>
<div style="position:absolute;left:469px;top:385px;width:1px;height:17px;background:#f4f4f4;"></div>
<div style="position:absolute;left:600px;top:385px;width:1px;height:17px;background:#b4b4b4;"></div>
<div style="position:absolute;left:601px;top:385px;width:1px;height:17px;background:#f4f4f4;"></div>
<div style="position:absolute;left:730px;top:385px;width:1px;height:17px;background:#b4b4b4;"></div>
<div style="position:absolute;left:731px;top:385px;width:1px;height:17px;background:#f4f4f4;"></div>
<div style="position:absolute;left:862px;top:385px;width:1px;height:17px;background:#b4b4b4;"></div>
<div style="position:absolute;left:863px;top:385px;width:1px;height:17px;background:#f4f4f4;"></div>
<div style="position:absolute;left:989px;top:385px;width:1px;height:17px;background:#b4b4b4;"></div>
<div style="position:absolute;left:990px;top:385px;width:1px;height:17px;background:#f4f4f4;"></div>
<div style="position:absolute;left:27px;top:402px;width:1114px;height:1px;background:#f4f4f4;"></div>
<div style="position:absolute;right:1090px;top:386.44px;font-family:'Liberation Serif',serif;font-weight:normal;font-size:13.8px;line-height:1;white-space:nowrap;color:#000;transform:scaleX(0.8707);transform-origin:right 0;-webkit-text-stroke:0.1px currentColor;">15</div>
<div style="position:absolute;left:98px;top:386.44px;font-family:'Liberation Serif',serif;font-weight:normal;font-size:13.8px;line-height:1;white-space:nowrap;color:#000;transform:scaleX(0.8971);transform-origin:left 0;-webkit-text-stroke:0.1px currentColor;">HONORARIOS - DIR. DE CONTROL DISCIPLINARIO INTERNO</div>
<div style="position:absolute;right:586px;top:386.44px;font-family:'Liberation Serif',serif;font-weight:normal;font-size:13.8px;line-height:1;white-space:nowrap;color:#000;transform:scaleX(0.8707);transform-origin:right 0;-webkit-text-stroke:0.1px currentColor;">2,982,5001</div>
<div style="position:absolute;right:456px;top:386.44px;font-family:'Liberation Serif',serif;font-weight:normal;font-size:13.8px;line-height:1;white-space:nowrap;color:#000;transform:scaleX(0.8707);transform-origin:right 0;-webkit-text-stroke:0.1px currentColor;">2,982,5001</div>
<div style="position:absolute;right:324px;top:386.44px;font-family:'Liberation Serif',serif;font-weight:normal;font-size:13.8px;line-height:1;white-space:nowrap;color:#000;transform:scaleX(0.8707);transform-origin:right 0;-webkit-text-stroke:0.1px currentColor;">2,982,5001</div>
<div style="position:absolute;right:197px;top:386.44px;font-family:'Liberation Serif',serif;font-weight:normal;font-size:13.8px;line-height:1;white-space:nowrap;color:#000;transform:scaleX(0.8707);transform-origin:right 0;-webkit-text-stroke:0.1px currentColor;">0</div>
<div style="position:absolute;right:46px;top:386.44px;font-family:'Liberation Serif',serif;font-weight:normal;font-size:13.8px;line-height:1;white-space:nowrap;color:#000;transform:scaleX(0.8707);transform-origin:right 0;-webkit-text-stroke:0.1px currentColor;">2,982,5001</div>
<div style="position:absolute;left:27px;top:403px;width:1114px;height:17px;background:#aaaaaa;"></div>
<div style="position:absolute;left:25px;top:420px;width:2px;height:1px;background:#a0a0a0;"></div>
<div style="position:absolute;left:96px;top:403px;width:1px;height:17px;background:#b4b4b4;"></div>
<div style="position:absolute;left:97px;top:403px;width:1px;height:17px;background:#f4f4f4;"></div>
<div style="position:absolute;left:468px;top:403px;width:1px;height:17px;background:#b4b4b4;"></div>
<div style="position:absolute;left:469px;top:403px;width:1px;height:17px;background:#f4f4f4;"></div>
<div style="position:absolute;left:600px;top:403px;width:1px;height:17px;background:#b4b4b4;"></div>
<div style="position:absolute;left:601px;top:403px;width:1px;height:17px;background:#f4f4f4;"></div>
<div style="position:absolute;left:730px;top:403px;width:1px;height:17px;background:#b4b4b4;"></div>
<div style="position:absolute;left:731px;top:403px;width:1px;height:17px;background:#f4f4f4;"></div>
<div style="position:absolute;left:862px;top:403px;width:1px;height:17px;background:#b4b4b4;"></div>
<div style="position:absolute;left:863px;top:403px;width:1px;height:17px;background:#f4f4f4;"></div>
<div style="position:absolute;left:989px;top:403px;width:1px;height:17px;background:#b4b4b4;"></div>
<div style="position:absolute;left:990px;top:403px;width:1px;height:17px;background:#f4f4f4;"></div>
<div style="position:absolute;left:27px;top:420px;width:1114px;height:1px;background:#f4f4f4;"></div>
<div style="position:absolute;right:1090px;top:404.44px;font-family:'Liberation Serif',serif;font-weight:normal;font-size:13.8px;line-height:1;white-space:nowrap;color:#000;transform:scaleX(0.8707);transform-origin:right 0;-webkit-text-stroke:0.1px currentColor;">16</div>
<div style="position:absolute;left:98px;top:404.44px;font-family:'Liberation Serif',serif;font-weight:normal;font-size:13.8px;line-height:1;white-space:nowrap;color:#000;transform:scaleX(0.8971);transform-origin:left 0;-webkit-text-stroke:0.1px currentColor;">HONORARIOS - OFICINA DE CONTROL INTERNO - OCIN</div>
<div style="position:absolute;right:586px;top:404.44px;font-family:'Liberation Serif',serif;font-weight:normal;font-size:13.8px;line-height:1;white-space:nowrap;color:#000;transform:scaleX(0.8707);transform-origin:right 0;-webkit-text-stroke:0.1px currentColor;">12,632,4924</div>
<div style="position:absolute;right:456px;top:404.44px;font-family:'Liberation Serif',serif;font-weight:normal;font-size:13.8px;line-height:1;white-space:nowrap;color:#000;transform:scaleX(0.8707);transform-origin:right 0;-webkit-text-stroke:0.1px currentColor;">12,632,4924</div>
<div style="position:absolute;right:324px;top:404.44px;font-family:'Liberation Serif',serif;font-weight:normal;font-size:13.8px;line-height:1;white-space:nowrap;color:#000;transform:scaleX(0.8707);transform-origin:right 0;-webkit-text-stroke:0.1px currentColor;">10,382,4924</div>
<div style="position:absolute;right:197px;top:404.44px;font-family:'Liberation Serif',serif;font-weight:normal;font-size:13.8px;line-height:1;white-space:nowrap;color:#000;transform:scaleX(0.8707);transform-origin:right 0;-webkit-text-stroke:0.1px currentColor;">0</div>
<div style="position:absolute;right:46px;top:404.44px;font-family:'Liberation Serif',serif;font-weight:normal;font-size:13.8px;line-height:1;white-space:nowrap;color:#000;transform:scaleX(0.8707);transform-origin:right 0;-webkit-text-stroke:0.1px currentColor;">12,632,4924</div>
<div style="position:absolute;left:27px;top:421px;width:1114px;height:17px;background:#aaaaaa;"></div>
<div style="position:absolute;left:25px;top:438px;width:2px;height:1px;background:#a0a0a0;"></div>
<div style="position:absolute;left:96px;top:421px;width:1px;height:17px;background:#b4b4b4;"></div>
<div style="position:absolute;left:97px;top:421px;width:1px;height:17px;background:#f4f4f4;"></div>
<div style="position:absolute;left:468px;top:421px;width:1px;height:17px;background:#b4b4b4;"></div>
<div style="position:absolute;left:469px;top:421px;width:1px;height:17px;background:#f4f4f4;"></div>
<div style="position:absolute;left:600px;top:421px;width:1px;height:17px;background:#b4b4b4;"></div>
<div style="position:absolute;left:601px;top:421px;width:1px;height:17px;background:#f4f4f4;"></div>
<div style="position:absolute;left:730px;top:421px;width:1px;height:17px;background:#b4b4b4;"></div>
<div style="position:absolute;left:731px;top:421px;width:1px;height:17px;background:#f4f4f4;"></div>
<div style="position:absolute;left:862px;top:421px;width:1px;height:17px;background:#b4b4b4;"></div>
<div style="position:absolute;left:863px;top:421px;width:1px;height:17px;background:#f4f4f4;"></div>
<div style="position:absolute;left:989px;top:421px;width:1px;height:17px;background:#b4b4b4;"></div>
<div style="position:absolute;left:990px;top:421px;width:1px;height:17px;background:#f4f4f4;"></div>
<div style="position:absolute;left:27px;top:438px;width:1114px;height:1px;background:#f4f4f4;"></div>
<div style="position:absolute;right:1090px;top:422.44px;font-family:'Liberation Serif',serif;font-weight:normal;font-size:13.8px;line-height:1;white-space:nowrap;color:#000;transform:scaleX(0.8707);transform-origin:right 0;-webkit-text-stroke:0.1px currentColor;">17</div>
<div style="position:absolute;left:98px;top:422.44px;font-family:'Liberation Serif',serif;font-weight:normal;font-size:13.8px;line-height:1;white-space:nowrap;color:#000;transform:scaleX(0.8971);transform-origin:left 0;-webkit-text-stroke:0.1px currentColor;">HONORARIOS - OFICINA DE TALENTO HUMANO - OTH</div>
<div style="position:absolute;right:586px;top:422.44px;font-family:'Liberation Serif',serif;font-weight:normal;font-size:13.8px;line-height:1;white-space:nowrap;color:#000;transform:scaleX(0.8707);transform-origin:right 0;-webkit-text-stroke:0.1px currentColor;">41,003,1474</div>
<div style="position:absolute;right:456px;top:422.44px;font-family:'Liberation Serif',serif;font-weight:normal;font-size:13.8px;line-height:1;white-space:nowrap;color:#000;transform:scaleX(0.8707);transform-origin:right 0;-webkit-text-stroke:0.1px currentColor;">41,003,1474</div>
<div style="position:absolute;right:324px;top:422.44px;font-family:'Liberation Serif',serif;font-weight:normal;font-size:13.8px;line-height:1;white-space:nowrap;color:#000;transform:scaleX(0.8707);transform-origin:right 0;-webkit-text-stroke:0.1px currentColor;">36,320,7774</div>
<div style="position:absolute;right:197px;top:422.44px;font-family:'Liberation Serif',serif;font-weight:normal;font-size:13.8px;line-height:1;white-space:nowrap;color:#000;transform:scaleX(0.8707);transform-origin:right 0;-webkit-text-stroke:0.1px currentColor;">0</div>
<div style="position:absolute;right:46px;top:422.44px;font-family:'Liberation Serif',serif;font-weight:normal;font-size:13.8px;line-height:1;white-space:nowrap;color:#000;transform:scaleX(0.8707);transform-origin:right 0;-webkit-text-stroke:0.1px currentColor;">41,003,1474</div>
<div style="position:absolute;left:27px;top:439px;width:1114px;height:17px;background:#aaaaaa;"></div>
<div style="position:absolute;left:25px;top:456px;width:2px;height:1px;background:#a0a0a0;"></div>
<div style="position:absolute;left:96px;top:439px;width:1px;height:17px;background:#b4b4b4;"></div>
<div style="position:absolute;left:97px;top:439px;width:1px;height:17px;background:#f4f4f4;"></div>
<div style="position:absolute;left:468px;top:439px;width:1px;height:17px;background:#b4b4b4;"></div>
<div style="position:absolute;left:469px;top:439px;width:1px;height:17px;background:#f4f4f4;"></div>
<div style="position:absolute;left:600px;top:439px;width:1px;height:17px;background:#b4b4b4;"></div>
<div style="position:absolute;left:601px;top:439px;width:1px;height:17px;background:#f4f4f4;"></div>
<div style="position:absolute;left:730px;top:439px;width:1px;height:17px;background:#b4b4b4;"></div>
<div style="position:absolute;left:731px;top:439px;width:1px;height:17px;background:#f4f4f4;"></div>
<div style="position:absolute;left:862px;top:439px;width:1px;height:17px;background:#b4b4b4;"></div>
<div style="position:absolute;left:863px;top:439px;width:1px;height:17px;background:#f4f4f4;"></div>
<div style="position:absolute;left:989px;top:439px;width:1px;height:17px;background:#b4b4b4;"></div>
<div style="position:absolute;left:990px;top:439px;width:1px;height:17px;background:#f4f4f4;"></div>
<div style="position:absolute;left:27px;top:456px;width:1114px;height:1px;background:#f4f4f4;"></div>
<div style="position:absolute;right:1090px;top:440.44px;font-family:'Liberation Serif',serif;font-weight:normal;font-size:13.8px;line-height:1;white-space:nowrap;color:#000;transform:scaleX(0.8707);transform-origin:right 0;-webkit-text-stroke:0.1px currentColor;">18</div>
<div style="position:absolute;left:98px;top:440.44px;font-family:'Liberation Serif',serif;font-weight:normal;font-size:13.8px;line-height:1;white-space:nowrap;color:#000;transform:scaleX(0.8971);transform-origin:left 0;-webkit-text-stroke:0.1px currentColor;">HONORARIOS - DIR. DE EVALUACIÓN SEGUIMIENTO Y CONT</div>
<div style="position:absolute;right:586px;top:440.44px;font-family:'Liberation Serif',serif;font-weight:normal;font-size:13.8px;line-height:1;white-space:nowrap;color:#000;transform:scaleX(0.8707);transform-origin:right 0;-webkit-text-stroke:0.1px currentColor;">18,615,4293</div>
<div style="position:absolute;right:456px;top:440.44px;font-family:'Liberation Serif',serif;font-weight:normal;font-size:13.8px;line-height:1;white-space:nowrap;color:#000;transform:scaleX(0.8707);transform-origin:right 0;-webkit-text-stroke:0.1px currentColor;">18,615,4293</div>
<div style="position:absolute;right:324px;top:440.44px;font-family:'Liberation Serif',serif;font-weight:normal;font-size:13.8px;line-height:1;white-space:nowrap;color:#000;transform:scaleX(0.8707);transform-origin:right 0;-webkit-text-stroke:0.1px currentColor;">16,135,2267</div>
<div style="position:absolute;right:197px;top:440.44px;font-family:'Liberation Serif',serif;font-weight:normal;font-size:13.8px;line-height:1;white-space:nowrap;color:#000;transform:scaleX(0.8707);transform-origin:right 0;-webkit-text-stroke:0.1px currentColor;">0</div>
<div style="position:absolute;right:46px;top:440.44px;font-family:'Liberation Serif',serif;font-weight:normal;font-size:13.8px;line-height:1;white-space:nowrap;color:#000;transform:scaleX(0.8707);transform-origin:right 0;-webkit-text-stroke:0.1px currentColor;">18,615,4293</div>
<div style="position:absolute;left:27px;top:457px;width:1114px;height:17px;background:#aaaaaa;"></div>
<div style="position:absolute;left:25px;top:474px;width:2px;height:1px;background:#a0a0a0;"></div>
<div style="position:absolute;left:96px;top:457px;width:1px;height:17px;background:#b4b4b4;"></div>
<div style="position:absolute;left:97px;top:457px;width:1px;height:17px;background:#f4f4f4;"></div>
<div style="position:absolute;left:468px;top:457px;width:1px;height:17px;background:#b4b4b4;"></div>
<div style="position:absolute;left:469px;top:457px;width:1px;height:17px;background:#f4f4f4;"></div>
<div style="position:absolute;left:600px;top:457px;width:1px;height:17px;background:#b4b4b4;"></div>
<div style="position:absolute;left:601px;top:457px;width:1px;height:17px;background:#f4f4f4;"></div>
<div style="position:absolute;left:730px;top:457px;width:1px;height:17px;background:#b4b4b4;"></div>
<div style="position:absolute;left:731px;top:457px;width:1px;height:17px;background:#f4f4f4;"></div>
<div style="position:absolute;left:862px;top:457px;width:1px;height:17px;background:#b4b4b4;"></div>
<div style="position:absolute;left:863px;top:457px;width:1px;height:17px;background:#f4f4f4;"></div>
<div style="position:absolute;left:989px;top:457px;width:1px;height:17px;background:#b4b4b4;"></div>
<div style="position:absolute;left:990px;top:457px;width:1px;height:17px;background:#f4f4f4;"></div>
<div style="position:absolute;left:27px;top:474px;width:1114px;height:1px;background:#f4f4f4;"></div>
<div style="position:absolute;right:1090px;top:458.44px;font-family:'Liberation Serif',serif;font-weight:normal;font-size:13.8px;line-height:1;white-space:nowrap;color:#000;transform:scaleX(0.8707);transform-origin:right 0;-webkit-text-stroke:0.1px currentColor;">19</div>
<div style="position:absolute;left:98px;top:458.44px;font-family:'Liberation Serif',serif;font-weight:normal;font-size:13.8px;line-height:1;white-space:nowrap;color:#000;transform:scaleX(0.8971);transform-origin:left 0;-webkit-text-stroke:0.1px currentColor;">HONORARIOS - DIR. JURÍDICA - DJUR</div>
<div style="position:absolute;right:586px;top:458.44px;font-family:'Liberation Serif',serif;font-weight:normal;font-size:13.8px;line-height:1;white-space:nowrap;color:#000;transform:scaleX(0.8707);transform-origin:right 0;-webkit-text-stroke:0.1px currentColor;">277,660,2765</div>
<div style="position:absolute;right:456px;top:458.44px;font-family:'Liberation Serif',serif;font-weight:normal;font-size:13.8px;line-height:1;white-space:nowrap;color:#000;transform:scaleX(0.8707);transform-origin:right 0;-webkit-text-stroke:0.1px currentColor;">277,660,2765</div>
<div style="position:absolute;right:324px;top:458.44px;font-family:'Liberation Serif',serif;font-weight:normal;font-size:13.8px;line-height:1;white-space:nowrap;color:#000;transform:scaleX(0.8707);transform-origin:right 0;-webkit-text-stroke:0.1px currentColor;">232,149,7665</div>
<div style="position:absolute;right:197px;top:458.44px;font-family:'Liberation Serif',serif;font-weight:normal;font-size:13.8px;line-height:1;white-space:nowrap;color:#000;transform:scaleX(0.8707);transform-origin:right 0;-webkit-text-stroke:0.1px currentColor;">0</div>
<div style="position:absolute;right:46px;top:458.44px;font-family:'Liberation Serif',serif;font-weight:normal;font-size:13.8px;line-height:1;white-space:nowrap;color:#000;transform:scaleX(0.8707);transform-origin:right 0;-webkit-text-stroke:0.1px currentColor;">277,660,2765</div>
<div style="position:absolute;left:27px;top:475px;width:1114px;height:17px;background:#aaaaaa;"></div>
<div style="position:absolute;left:25px;top:492px;width:2px;height:1px;background:#a0a0a0;"></div>
<div style="position:absolute;left:96px;top:475px;width:1px;height:17px;background:#b4b4b4;"></div>
<div style="position:absolute;left:97px;top:475px;width:1px;height:17px;background:#f4f4f4;"></div>
<div style="position:absolute;left:468px;top:475px;width:1px;height:17px;background:#b4b4b4;"></div>
<div style="position:absolute;left:469px;top:475px;width:1px;height:17px;background:#f4f4f4;"></div>
<div style="position:absolute;left:600px;top:475px;width:1px;height:17px;background:#b4b4b4;"></div>
<div style="position:absolute;left:601px;top:475px;width:1px;height:17px;background:#f4f4f4;"></div>
<div style="position:absolute;left:730px;top:475px;width:1px;height:17px;background:#b4b4b4;"></div>
<div style="position:absolute;left:731px;top:475px;width:1px;height:17px;background:#f4f4f4;"></div>
<div style="position:absolute;left:862px;top:475px;width:1px;height:17px;background:#b4b4b4;"></div>
<div style="position:absolute;left:863px;top:475px;width:1px;height:17px;background:#f4f4f4;"></div>
<div style="position:absolute;left:989px;top:475px;width:1px;height:17px;background:#b4b4b4;"></div>
<div style="position:absolute;left:990px;top:475px;width:1px;height:17px;background:#f4f4f4;"></div>
<div style="position:absolute;left:27px;top:492px;width:1114px;height:1px;background:#f4f4f4;"></div>
<div style="position:absolute;right:1090px;top:476.44px;font-family:'Liberation Serif',serif;font-weight:normal;font-size:13.8px;line-height:1;white-space:nowrap;color:#000;transform:scaleX(0.8707);transform-origin:right 0;-webkit-text-stroke:0.1px currentColor;">20</div>
<div style="position:absolute;left:98px;top:476.44px;font-family:'Liberation Serif',serif;font-weight:normal;font-size:13.8px;line-height:1;white-space:nowrap;color:#000;transform:scaleX(0.8971);transform-origin:left 0;-webkit-text-stroke:0.1px currentColor;">HONORARIOS - DIR. CULTURA AMBIENTAL Y SERVICIO AL</div>
<div style="position:absolute;right:586px;top:476.44px;font-family:'Liberation Serif',serif;font-weight:normal;font-size:13.8px;line-height:1;white-space:nowrap;color:#000;transform:scaleX(0.8707);transform-origin:right 0;-webkit-text-stroke:0.1px currentColor;">6,769,1400</div>
<div style="position:absolute;right:456px;top:476.44px;font-family:'Liberation Serif',serif;font-weight:normal;font-size:13.8px;line-height:1;white-space:nowrap;color:#000;transform:scaleX(0.8707);transform-origin:right 0;-webkit-text-stroke:0.1px currentColor;">6,769,1400</div>
<div style="position:absolute;right:324px;top:476.44px;font-family:'Liberation Serif',serif;font-weight:normal;font-size:13.8px;line-height:1;white-space:nowrap;color:#000;transform:scaleX(0.8707);transform-origin:right 0;-webkit-text-stroke:0.1px currentColor;">6,553,1400</div>
<div style="position:absolute;right:197px;top:476.44px;font-family:'Liberation Serif',serif;font-weight:normal;font-size:13.8px;line-height:1;white-space:nowrap;color:#000;transform:scaleX(0.8707);transform-origin:right 0;-webkit-text-stroke:0.1px currentColor;">0</div>
<div style="position:absolute;right:46px;top:476.44px;font-family:'Liberation Serif',serif;font-weight:normal;font-size:13.8px;line-height:1;white-space:nowrap;color:#000;transform:scaleX(0.8707);transform-origin:right 0;-webkit-text-stroke:0.1px currentColor;">6,769,1400</div>
<div style="position:absolute;left:27px;top:493px;width:1114px;height:17px;background:#aaaaaa;"></div>
<div style="position:absolute;left:25px;top:510px;width:2px;height:1px;background:#a0a0a0;"></div>
<div style="position:absolute;left:96px;top:493px;width:1px;height:17px;background:#b4b4b4;"></div>
<div style="position:absolute;left:97px;top:493px;width:1px;height:17px;background:#f4f4f4;"></div>
<div style="position:absolute;left:468px;top:493px;width:1px;height:17px;background:#b4b4b4;"></div>
<div style="position:absolute;left:469px;top:493px;width:1px;height:17px;background:#f4f4f4;"></div>
<div style="position:absolute;left:600px;top:493px;width:1px;height:17px;background:#b4b4b4;"></div>
<div style="position:absolute;left:601px;top:493px;width:1px;height:17px;background:#f4f4f4;"></div>
<div style="position:absolute;left:730px;top:493px;width:1px;height:17px;background:#b4b4b4;"></div>
<div style="position:absolute;left:731px;top:493px;width:1px;height:17px;background:#f4f4f4;"></div>
<div style="position:absolute;left:862px;top:493px;width:1px;height:17px;background:#b4b4b4;"></div>
<div style="position:absolute;left:863px;top:493px;width:1px;height:17px;background:#f4f4f4;"></div>
<div style="position:absolute;left:989px;top:493px;width:1px;height:17px;background:#b4b4b4;"></div>
<div style="position:absolute;left:990px;top:493px;width:1px;height:17px;background:#f4f4f4;"></div>
<div style="position:absolute;left:27px;top:510px;width:1114px;height:1px;background:#f4f4f4;"></div>
<div style="position:absolute;right:1090px;top:494.44px;font-family:'Liberation Serif',serif;font-weight:normal;font-size:13.8px;line-height:1;white-space:nowrap;color:#000;transform:scaleX(0.8707);transform-origin:right 0;-webkit-text-stroke:0.1px currentColor;">21</div>
<div style="position:absolute;left:98px;top:494.44px;font-family:'Liberation Serif',serif;font-weight:normal;font-size:13.8px;line-height:1;white-space:nowrap;color:#000;transform:scaleX(0.8971);transform-origin:left 0;-webkit-text-stroke:0.1px currentColor;">HONORARIOS - DIR. ADMINISTRATIVA Y FINANCIERA - DA</div>
<div style="position:absolute;right:586px;top:494.44px;font-family:'Liberation Serif',serif;font-weight:normal;font-size:13.8px;line-height:1;white-space:nowrap;color:#000;transform:scaleX(0.8707);transform-origin:right 0;-webkit-text-stroke:0.1px currentColor;">114,422,7501</div>
<div style="position:absolute;right:456px;top:494.44px;font-family:'Liberation Serif',serif;font-weight:normal;font-size:13.8px;line-height:1;white-space:nowrap;color:#000;transform:scaleX(0.8707);transform-origin:right 0;-webkit-text-stroke:0.1px currentColor;">114,422,7501</div>
<div style="position:absolute;right:324px;top:494.44px;font-family:'Liberation Serif',serif;font-weight:normal;font-size:13.8px;line-height:1;white-space:nowrap;color:#000;transform:scaleX(0.8707);transform-origin:right 0;-webkit-text-stroke:0.1px currentColor;">80,755,7208</div>
<div style="position:absolute;right:197px;top:494.44px;font-family:'Liberation Serif',serif;font-weight:normal;font-size:13.8px;line-height:1;white-space:nowrap;color:#000;transform:scaleX(0.8707);transform-origin:right 0;-webkit-text-stroke:0.1px currentColor;">0</div>
<div style="position:absolute;right:46px;top:494.44px;font-family:'Liberation Serif',serif;font-weight:normal;font-size:13.8px;line-height:1;white-space:nowrap;color:#000;transform:scaleX(0.8707);transform-origin:right 0;-webkit-text-stroke:0.1px currentColor;">114,422,7501</div>
<div style="position:absolute;left:27px;top:511px;width:1114px;height:17px;background:#aaaaaa;"></div>
<div style="position:absolute;left:25px;top:528px;width:2px;height:1px;background:#a0a0a0;"></div>
<div style="position:absolute;left:96px;top:511px;width:1px;height:17px;background:#b4b4b4;"></div>
<div style="position:absolute;left:97px;top:511px;width:1px;height:17px;background:#f4f4f4;"></div>
<div style="position:absolute;left:468px;top:511px;width:1px;height:17px;background:#b4b4b4;"></div>
<div style="position:absolute;left:469px;top:511px;width:1px;height:17px;background:#f4f4f4;"></div>
<div style="position:absolute;left:600px;top:511px;width:1px;height:17px;background:#b4b4b4;"></div>
<div style="position:absolute;left:601px;top:511px;width:1px;height:17px;background:#f4f4f4;"></div>
<div style="position:absolute;left:730px;top:511px;width:1px;height:17px;background:#b4b4b4;"></div>
<div style="position:absolute;left:731px;top:511px;width:1px;height:17px;background:#f4f4f4;"></div>
<div style="position:absolute;left:862px;top:511px;width:1px;height:17px;background:#b4b4b4;"></div>
<div style="position:absolute;left:863px;top:511px;width:1px;height:17px;background:#f4f4f4;"></div>
<div style="position:absolute;left:989px;top:511px;width:1px;height:17px;background:#b4b4b4;"></div>
<div style="position:absolute;left:990px;top:511px;width:1px;height:17px;background:#f4f4f4;"></div>
<div style="position:absolute;left:27px;top:528px;width:1114px;height:1px;background:#f4f4f4;"></div>
<div style="position:absolute;right:1090px;top:512.44px;font-family:'Liberation Serif',serif;font-weight:normal;font-size:13.8px;line-height:1;white-space:nowrap;color:#000;transform:scaleX(0.8707);transform-origin:right 0;-webkit-text-stroke:0.1px currentColor;">22</div>
<div style="position:absolute;left:98px;top:512.44px;font-family:'Liberation Serif',serif;font-weight:normal;font-size:13.8px;line-height:1;white-space:nowrap;color:#000;transform:scaleX(0.8971);transform-origin:left 0;-webkit-text-stroke:0.1px currentColor;">REMUNERACION SERVICIOS TECNICOS - SECRETARÍA GENER</div>
<div style="position:absolute;right:586px;top:512.44px;font-family:'Liberation Serif',serif;font-weight:normal;font-size:13.8px;line-height:1;white-space:nowrap;color:#000;transform:scaleX(0.8707);transform-origin:right 0;-webkit-text-stroke:0.1px currentColor;">20,577,1299</div>
<div style="position:absolute;right:456px;top:512.44px;font-family:'Liberation Serif',serif;font-weight:normal;font-size:13.8px;line-height:1;white-space:nowrap;color:#000;transform:scaleX(0.8707);transform-origin:right 0;-webkit-text-stroke:0.1px currentColor;">20,577,1299</div>
<div style="position:absolute;right:324px;top:512.44px;font-family:'Liberation Serif',serif;font-weight:normal;font-size:13.8px;line-height:1;white-space:nowrap;color:#000;transform:scaleX(0.8707);transform-origin:right 0;-webkit-text-stroke:0.1px currentColor;">15,887,1297</div>
<div style="position:absolute;right:197px;top:512.44px;font-family:'Liberation Serif',serif;font-weight:normal;font-size:13.8px;line-height:1;white-space:nowrap;color:#000;transform:scaleX(0.8707);transform-origin:right 0;-webkit-text-stroke:0.1px currentColor;">0</div>
<div style="position:absolute;right:46px;top:512.44px;font-family:'Liberation Serif',serif;font-weight:normal;font-size:13.8px;line-height:1;white-space:nowrap;color:#000;transform:scaleX(0.8707);transform-origin:right 0;-webkit-text-stroke:0.1px currentColor;">20,577,1299</div>
<div style="position:absolute;left:27px;top:529px;width:1114px;height:17px;background:#aaaaaa;"></div>
<div style="position:absolute;left:25px;top:546px;width:2px;height:1px;background:#a0a0a0;"></div>
<div style="position:absolute;left:96px;top:529px;width:1px;height:17px;background:#b4b4b4;"></div>
<div style="position:absolute;left:97px;top:529px;width:1px;height:17px;background:#f4f4f4;"></div>
<div style="position:absolute;left:468px;top:529px;width:1px;height:17px;background:#b4b4b4;"></div>
<div style="position:absolute;left:469px;top:529px;width:1px;height:17px;background:#f4f4f4;"></div>
<div style="position:absolute;left:600px;top:529px;width:1px;height:17px;background:#b4b4b4;"></div>
<div style="position:absolute;left:601px;top:529px;width:1px;height:17px;background:#f4f4f4;"></div>
<div style="position:absolute;left:730px;top:529px;width:1px;height:17px;background:#b4b4b4;"></div>
<div style="position:absolute;left:731px;top:529px;width:1px;height:17px;background:#f4f4f4;"></div>
<div style="position:absolute;left:862px;top:529px;width:1px;height:17px;background:#b4b4b4;"></div>
<div style="position:absolute;left:863px;top:529px;width:1px;height:17px;background:#f4f4f4;"></div>
<div style="position:absolute;left:989px;top:529px;width:1px;height:17px;background:#b4b4b4;"></div>
<div style="position:absolute;left:990px;top:529px;width:1px;height:17px;background:#f4f4f4;"></div>
<div style="position:absolute;left:27px;top:546px;width:1114px;height:1px;background:#f4f4f4;"></div>
<div style="position:absolute;right:1090px;top:530.44px;font-family:'Liberation Serif',serif;font-weight:normal;font-size:13.8px;line-height:1;white-space:nowrap;color:#000;transform:scaleX(0.8707);transform-origin:right 0;-webkit-text-stroke:0.1px currentColor;">23</div>
<div style="position:absolute;left:98px;top:530.44px;font-family:'Liberation Serif',serif;font-weight:normal;font-size:13.8px;line-height:1;white-space:nowrap;color:#000;transform:scaleX(0.8971);transform-origin:left 0;-webkit-text-stroke:0.1px currentColor;">REMUNERACION SERVICIOS TECNICOS - OFICINA DE TALEN</div>
<div style="position:absolute;right:586px;top:530.44px;font-family:'Liberation Serif',serif;font-weight:normal;font-size:13.8px;line-height:1;white-space:nowrap;color:#000;transform:scaleX(0.8707);transform-origin:right 0;-webkit-text-stroke:0.1px currentColor;">4,374,9942</div>
<div style="position:absolute;right:456px;top:530.44px;font-family:'Liberation Serif',serif;font-weight:normal;font-size:13.8px;line-height:1;white-space:nowrap;color:#000;transform:scaleX(0.8707);transform-origin:right 0;-webkit-text-stroke:0.1px currentColor;">4,374,9942</div>
<div style="position:absolute;right:324px;top:530.44px;font-family:'Liberation Serif',serif;font-weight:normal;font-size:13.8px;line-height:1;white-space:nowrap;color:#000;transform:scaleX(0.8707);transform-origin:right 0;-webkit-text-stroke:0.1px currentColor;">3,517,5390</div>
<div style="position:absolute;right:197px;top:530.44px;font-family:'Liberation Serif',serif;font-weight:normal;font-size:13.8px;line-height:1;white-space:nowrap;color:#000;transform:scaleX(0.8707);transform-origin:right 0;-webkit-text-stroke:0.1px currentColor;">0</div>
<div style="position:absolute;right:46px;top:530.44px;font-family:'Liberation Serif',serif;font-weight:normal;font-size:13.8px;line-height:1;white-space:nowrap;color:#000;transform:scaleX(0.8707);transform-origin:right 0;-webkit-text-stroke:0.1px currentColor;">4,374,9942</div>
<div class="a" style="left:25px;top:562px;width:72px;height:17px;border-top:1px solid #a0a0a0;border-left:1px solid #a0a0a0;border-bottom:1px solid #fff;box-shadow:inset 0 -1px 0 #f0f0f0,inset 1px 1px 0 #696969"></div>
<div class="a" style="left:96px;top:562px;width:373px;height:17px;border-top:1px solid #a0a0a0;border-left:1px solid #a0a0a0;border-bottom:1px solid #fff;box-shadow:inset 0 -1px 0 #f0f0f0,inset 1px 1px 0 #696969"></div>
<div class="a" style="left:469px;top:563px;width:132px;height:15px;border:1px solid #a0a0a0"></div>
<div style="position:absolute;right:586px;top:564.84px;font-family:'Liberation Sans',sans-serif;font-weight:normal;font-size:12px;line-height:1;white-space:nowrap;color:#000;transform:scaleX(0.925);transform-origin:right 0;">97,211,111,0679</div>
<div class="a" style="left:601px;top:563px;width:130px;height:15px;border:1px solid #a0a0a0"></div>
<div style="position:absolute;right:456px;top:564.84px;font-family:'Liberation Sans',sans-serif;font-weight:normal;font-size:12px;line-height:1;white-space:nowrap;color:#000;transform:scaleX(0.925);transform-origin:right 0;">96,910,008,0477</div>
<div class="a" style="left:731px;top:563px;width:132px;height:15px;border:1px solid #a0a0a0"></div>
<div style="position:absolute;right:324px;top:564.84px;font-family:'Liberation Sans',sans-serif;font-weight:normal;font-size:12px;line-height:1;white-space:nowrap;color:#000;transform:scaleX(0.925);transform-origin:right 0;">30,204,117,8208</div>
<div class="a" style="left:863px;top:563px;width:127px;height:15px;border:1px solid #a0a0a0"></div>
<div style="position:absolute;right:197px;top:564.84px;font-family:'Liberation Sans',sans-serif;font-weight:normal;font-size:12px;line-height:1;white-space:nowrap;color:#000;transform:scaleX(0.925);transform-origin:right 0;">0</div>
<div class="a" style="left:990px;top:563px;width:151px;height:15px;border:1px solid #a0a0a0"></div>
<div style="position:absolute;right:46px;top:564.84px;font-family:'Liberation Sans',sans-serif;font-weight:normal;font-size:12px;line-height:1;white-space:nowrap;color:#000;transform:scaleX(0.925);transform-origin:right 0;">97,211,111,0679</div>
</body></html>
